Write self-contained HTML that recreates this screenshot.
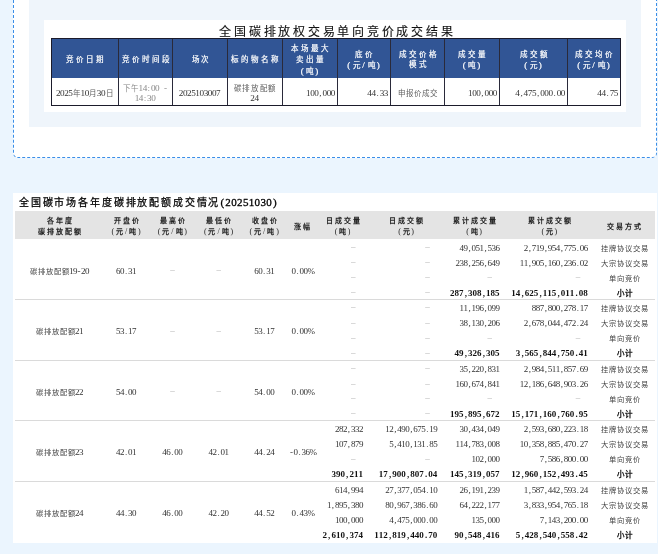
<!DOCTYPE html><html lang="zh-CN"><head><meta charset="utf-8"><style>
*{margin:0;padding:0;box-sizing:border-box}
html,body{width:658px;height:554px;overflow:hidden;background:#ebf5fe}
body{position:relative;font-family:"Liberation Serif",serif;color:#333;will-change:transform}
div{position:absolute;white-space:nowrap}
x,y{display:inline-block;text-align:center;font-style:normal}
#dash{left:13px;top:-20px;width:644px;height:178px;border:1px dashed #3a8ee8;border-radius:5px;background:#fff}
#inner{left:29px;top:-10px;width:612px;height:137px;background:#eff5fb}
#img1{left:44px;top:20px;width:582px;height:92px;background:#fff}
#t1{left:51px;top:38px;width:570px;height:68px;border:1px solid #1b1b2b;background:#fff}
#t1h{left:0;top:0;width:568px;height:39px;background:#315595}
.vl{top:0;width:1px;height:66px;background:#2a2a3a}
#img2{left:13px;top:193px;width:644px;height:350px;background:#fff}
#band{left:15px;top:211px;width:640px;height:28px;background:#e4e4e4}
.sep{left:15px;width:640px;height:1px;background:#dadada}
.tt1{font-size:12px;color:#111;line-height:16px;-webkit-text-stroke:0.12px #111}
.tt2{font-size:10px;color:#000;line-height:14px;-webkit-text-stroke:0.25px #000}
.tt2 x{font-size:11px;-webkit-text-stroke:0.3px #000}
.h1{color:#fff;font-size:7.5px;font-weight:normal;-webkit-text-stroke:0.2px #fff;line-height:10.7px;text-align:center}
.h1 x{font-size:9px}
.h2{color:#222;font-size:7px;font-weight:bold;line-height:10.4px;text-align:center}
.h2 x{font-size:8px;font-weight:normal}
.n1{color:#333;font-size:9.2px;line-height:9.4px}
.n1 y{font-size:7.5px;color:#606060}
.n2{color:#333;font-size:9px;line-height:10px}
.n2 y{font-size:7.3px;color:#444}
.bd{font-weight:bold;color:#111}
.bd y{font-size:7.5px;color:#111;font-weight:normal;-webkit-text-stroke:0.35px #111}
.g{color:#aaa}
.g2,.g2 y{color:#888}
</style></head><body><div id="dash"></div><div id="inner"></div><div id="img1"></div><div class="tt1" style="left:218px;top:24px"><y style="width:14.75px">全</y><y style="width:14.75px">国</y><y style="width:14.75px">碳</y><y style="width:14.75px">排</y><y style="width:14.75px">放</y><y style="width:14.75px">权</y><y style="width:14.75px">交</y><y style="width:14.75px">易</y><y style="width:14.75px">单</y><y style="width:14.75px">向</y><y style="width:14.75px">竞</y><y style="width:14.75px">价</y><y style="width:14.75px">成</y><y style="width:14.75px">交</y><y style="width:14.75px">结</y><y style="width:14.75px">果</y></div><div id="t1"><div id="t1h"></div><div class="vl" style="left:66px"></div><div class="vl" style="left:120px"></div><div class="vl" style="left:175px"></div><div class="vl" style="left:230px"></div><div class="vl" style="left:285px"></div><div class="vl" style="left:338px"></div><div class="vl" style="left:392px"></div><div class="vl" style="left:447px"></div><div class="vl" style="left:515px"></div></div><div class="h1" style="left:51px;width:67px;top:54.9px"><y style="width:10px">竞</y><y style="width:10px">价</y><y style="width:10px">日</y><y style="width:10px">期</y></div><div class="h1" style="left:118px;width:54px;top:54.9px"><y style="width:10px">竞</y><y style="width:10px">价</y><y style="width:10px">时</y><y style="width:10px">间</y><y style="width:10px">段</y></div><div class="h1" style="left:172px;width:55px;top:54.9px"><y style="width:9px">场</y><y style="width:9px">次</y></div><div class="h1" style="left:227px;width:55px;top:54.9px"><y style="width:10px">标</y><y style="width:10px">的</y><y style="width:10px">物</y><y style="width:10px">名</y><y style="width:10px">称</y></div><div class="h1" style="left:282px;width:55px;top:44.2px"><y style="width:10px">本</y><y style="width:10px">场</y><y style="width:10px">最</y><y style="width:10px">大</y><br><y style="width:10px">卖</y><y style="width:10px">出</y><y style="width:10px">量</y><br><y style="width:10px;text-align:right;padding-right:0.8px"><x>(</x></y><y style="width:10px">吨</y><y style="width:10px;text-align:left;padding-left:0.8px"><x>)</x></y></div><div class="h1" style="left:337px;width:53px;top:49.5px"><y style="width:10px">底</y><y style="width:10px">价</y><br><y style="width:10px;text-align:right;padding-right:0.8px"><x>(</x></y><y style="width:10px">元</y><x style="width:5px">/</x><y style="width:10px">吨</y><y style="width:10px;text-align:left;padding-left:0.8px"><x>)</x></y></div><div class="h1" style="left:390px;width:54px;top:49.5px"><y style="width:10px">成</y><y style="width:10px">交</y><y style="width:10px">价</y><y style="width:10px">格</y><br><y style="width:10px">模</y><y style="width:10px">式</y></div><div class="h1" style="left:444px;width:55px;top:49.5px"><y style="width:10px">成</y><y style="width:10px">交</y><y style="width:10px">量</y><br><y style="width:10px;text-align:right;padding-right:0.8px"><x>(</x></y><y style="width:10px">吨</y><y style="width:10px;text-align:left;padding-left:0.8px"><x>)</x></y></div><div class="h1" style="left:499px;width:68px;top:49.5px"><y style="width:10px">成</y><y style="width:10px">交</y><y style="width:10px">额</y><br><y style="width:10px;text-align:right;padding-right:0.8px"><x>(</x></y><y style="width:10px">元</y><y style="width:10px;text-align:left;padding-left:0.8px"><x>)</x></y></div><div class="h1" style="left:567px;width:53px;top:49.5px"><y style="width:10px">成</y><y style="width:10px">交</y><y style="width:10px">均</y><y style="width:10px">价</y><br><y style="width:10px;text-align:right;padding-right:0.8px"><x>(</x></y><y style="width:10px">元</y><x style="width:5px">/</x><y style="width:10px">吨</y><y style="width:10px;text-align:left;padding-left:0.8px"><x>)</x></y></div><div class="n1 " style="left:51px;width:67px;text-align:center;top:89.1px"><x style="width:4.15px">2</x><x style="width:4.15px">0</x><x style="width:4.15px">2</x><x style="width:4.15px">5</x><y style="width:8px">年</y><x style="width:4.15px">1</x><x style="width:4.15px">0</x><y style="width:8px">月</y><x style="width:4.15px">3</x><x style="width:4.15px">0</x><y style="width:8px">日</y></div><div class="n1 g2" style="left:118px;width:54px;text-align:center;top:84.4px"><y style="width:8px">下</y><y style="width:8px">午</y><x style="width:4.15px">1</x><x style="width:4.15px">4</x><x style="width:4.15px">:</x><x style="width:4.15px">0</x><x style="width:4.15px">0</x><x style="width:4.15px"></x><x style="width:4.15px">-</x><br><x style="width:4.15px">1</x><x style="width:4.15px">4</x><x style="width:4.15px">:</x><x style="width:4.15px">3</x><x style="width:4.15px">0</x></div><div class="n1 " style="left:172px;width:55px;text-align:center;top:89.1px"><x style="width:4.15px">2</x><x style="width:4.15px">0</x><x style="width:4.15px">2</x><x style="width:4.15px">5</x><x style="width:4.15px">1</x><x style="width:4.15px">0</x><x style="width:4.15px">3</x><x style="width:4.15px">0</x><x style="width:4.15px">0</x><x style="width:4.15px">7</x></div><div class="n1 " style="left:227px;width:55px;text-align:center;top:84.4px"><y style="width:8.6px">碳</y><y style="width:8.6px">排</y><y style="width:8.6px">放</y><y style="width:8.6px">配</y><y style="width:8.6px">额</y><br><x style="width:4.15px">2</x><x style="width:4.15px">4</x></div><div class="n1 " style="left:282px;width:53px;text-align:right;top:89.1px"><x style="width:4.15px">1</x><x style="width:4.15px">0</x><x style="width:4.15px">0</x><x style="width:4.15px">,</x><x style="width:4.15px">0</x><x style="width:4.15px">0</x><x style="width:4.15px">0</x></div><div class="n1 " style="left:337px;width:51px;text-align:right;top:89.1px"><x style="width:4.15px">4</x><x style="width:4.15px">4</x><x style="width:4.15px">.</x><x style="width:4.15px">3</x><x style="width:4.15px">3</x></div><div class="n1 " style="left:390px;width:54px;text-align:center;top:89.1px"><y style="width:8px">申</y><y style="width:8px">报</y><y style="width:8px">价</y><y style="width:8px">成</y><y style="width:8px">交</y></div><div class="n1 " style="left:444px;width:53px;text-align:right;top:89.1px"><x style="width:4.15px">1</x><x style="width:4.15px">0</x><x style="width:4.15px">0</x><x style="width:4.15px">,</x><x style="width:4.15px">0</x><x style="width:4.15px">0</x><x style="width:4.15px">0</x></div><div class="n1 " style="left:499px;width:66px;text-align:right;top:89.1px"><x style="width:4.15px">4</x><x style="width:4.15px">,</x><x style="width:4.15px">4</x><x style="width:4.15px">7</x><x style="width:4.15px">5</x><x style="width:4.15px">,</x><x style="width:4.15px">0</x><x style="width:4.15px">0</x><x style="width:4.15px">0</x><x style="width:4.15px">.</x><x style="width:4.15px">0</x><x style="width:4.15px">0</x></div><div class="n1 " style="left:567px;width:51px;text-align:right;top:89.1px"><x style="width:4.15px">4</x><x style="width:4.15px">4</x><x style="width:4.15px">.</x><x style="width:4.15px">7</x><x style="width:4.15px">5</x></div><div id="img2"></div><div class="tt2" style="left:18px;top:195px"><y style="width:11.85px">全</y><y style="width:11.85px">国</y><y style="width:11.85px">碳</y><y style="width:11.85px">市</y><y style="width:11.85px">场</y><y style="width:11.85px">各</y><y style="width:11.85px">年</y><y style="width:11.85px">度</y><y style="width:11.85px">碳</y><y style="width:11.85px">排</y><y style="width:11.85px">放</y><y style="width:11.85px">配</y><y style="width:11.85px">额</y><y style="width:11.85px">成</y><y style="width:11.85px">交</y><y style="width:11.85px">情</y><y style="width:11.85px">况</y><x style="width:5.85px">(</x><x style="width:5.85px">2</x><x style="width:5.85px">0</x><x style="width:5.85px">2</x><x style="width:5.85px">5</x><x style="width:5.85px">1</x><x style="width:5.85px">0</x><x style="width:5.85px">3</x><x style="width:5.85px">0</x><x style="width:5.85px">)</x></div><div id="band"></div><div class="h2" style="left:59.0px;width:80px;margin-left:-40px;top:216.3px"><y style="width:9px">各</y><y style="width:9px">年</y><y style="width:9px">度</y><br><y style="width:9px">碳</y><y style="width:9px">排</y><y style="width:9px">放</y><y style="width:9px">配</y><y style="width:9px">额</y></div><div class="h2" style="left:126.0px;width:80px;margin-left:-40px;top:216.3px"><y style="width:9px">开</y><y style="width:9px">盘</y><y style="width:9px">价</y><br><y style="width:9px;text-align:right;padding-right:0.7px"><x>(</x></y><y style="width:9px">元</y><x style="width:4.5px">/</x><y style="width:9px">吨</y><y style="width:9px;text-align:left;padding-left:0.7px"><x>)</x></y></div><div class="h2" style="left:172.3px;width:80px;margin-left:-40px;top:216.3px"><y style="width:9px">最</y><y style="width:9px">高</y><y style="width:9px">价</y><br><y style="width:9px;text-align:right;padding-right:0.7px"><x>(</x></y><y style="width:9px">元</y><x style="width:4.5px">/</x><y style="width:9px">吨</y><y style="width:9px;text-align:left;padding-left:0.7px"><x>)</x></y></div><div class="h2" style="left:218.5px;width:80px;margin-left:-40px;top:216.3px"><y style="width:9px">最</y><y style="width:9px">低</y><y style="width:9px">价</y><br><y style="width:9px;text-align:right;padding-right:0.7px"><x>(</x></y><y style="width:9px">元</y><x style="width:4.5px">/</x><y style="width:9px">吨</y><y style="width:9px;text-align:left;padding-left:0.7px"><x>)</x></y></div><div class="h2" style="left:264.2px;width:80px;margin-left:-40px;top:216.3px"><y style="width:9px">收</y><y style="width:9px">盘</y><y style="width:9px">价</y><br><y style="width:9px;text-align:right;padding-right:0.7px"><x>(</x></y><y style="width:9px">元</y><x style="width:4.5px">/</x><y style="width:9px">吨</y><y style="width:9px;text-align:left;padding-left:0.7px"><x>)</x></y></div><div class="h2" style="left:301.5px;width:80px;margin-left:-40px;top:221.5px"><y style="width:9px">涨</y><y style="width:9px">幅</y></div><div class="h2" style="left:342.5px;width:80px;margin-left:-40px;top:216.3px"><y style="width:9px">日</y><y style="width:9px">成</y><y style="width:9px">交</y><y style="width:9px">量</y><br><y style="width:9px;text-align:right;padding-right:0.7px"><x>(</x></y><y style="width:9px">吨</y><y style="width:9px;text-align:left;padding-left:0.7px"><x>)</x></y></div><div class="h2" style="left:406.0px;width:80px;margin-left:-40px;top:216.3px"><y style="width:9px">日</y><y style="width:9px">成</y><y style="width:9px">交</y><y style="width:9px">额</y><br><y style="width:9px;text-align:right;padding-right:0.7px"><x>(</x></y><y style="width:9px">元</y><y style="width:9px;text-align:left;padding-left:0.7px"><x>)</x></y></div><div class="h2" style="left:474.0px;width:80px;margin-left:-40px;top:216.3px"><y style="width:9px">累</y><y style="width:9px">计</y><y style="width:9px">成</y><y style="width:9px">交</y><y style="width:9px">量</y><br><y style="width:9px;text-align:right;padding-right:0.7px"><x>(</x></y><y style="width:9px">吨</y><y style="width:9px;text-align:left;padding-left:0.7px"><x>)</x></y></div><div class="h2" style="left:549.3px;width:80px;margin-left:-40px;top:216.3px"><y style="width:9px">累</y><y style="width:9px">计</y><y style="width:9px">成</y><y style="width:9px">交</y><y style="width:9px">额</y><br><y style="width:9px;text-align:right;padding-right:0.7px"><x>(</x></y><y style="width:9px">元</y><y style="width:9px;text-align:left;padding-left:0.7px"><x>)</x></y></div><div class="h2" style="left:624.0px;width:80px;margin-left:-40px;top:221.5px"><y style="width:9px">交</y><y style="width:9px">易</y><y style="width:9px">方</y><y style="width:9px">式</y></div><div class="n2" style="left:59.0px;width:100px;margin-left:-50px;text-align:center;top:265.7px"><y style="width:8px">碳</y><y style="width:8px">排</y><y style="width:8px">放</y><y style="width:8px">配</y><y style="width:8px">额</y><x style="width:4px">1</x><x style="width:4px">9</x><x style="width:4px">-</x><x style="width:4px">2</x><x style="width:4px">0</x></div><div class="n2" style="left:126.0px;width:100px;margin-left:-50px;text-align:center;top:265.7px"><x style="width:4px">6</x><x style="width:4px">0</x><x style="width:4px">.</x><x style="width:4px">3</x><x style="width:4px">1</x></div><div class="n2 g" style="left:172.3px;width:100px;margin-left:-50px;text-align:center;top:265.7px"><x style="width:4px;position:relative;top:-1.6px">–</x></div><div class="n2 g" style="left:218.5px;width:100px;margin-left:-50px;text-align:center;top:265.7px"><x style="width:4px;position:relative;top:-1.6px">–</x></div><div class="n2" style="left:264.2px;width:100px;margin-left:-50px;text-align:center;top:265.7px"><x style="width:4px">6</x><x style="width:4px">0</x><x style="width:4px">.</x><x style="width:4px">3</x><x style="width:4px">1</x></div><div class="n2" style="left:301.5px;width:100px;margin-left:-50px;text-align:center;top:265.7px"><x style="width:4px">0</x><x style="width:4px">.</x><x style="width:4px">0</x><x style="width:4px">0</x><x style="width:4px">%</x></div><div class="n2 g" style="left:362.9px;width:120px;margin-left:-120px;text-align:right;top:242.5px"><x style="width:4px;position:relative;top:-1.6px">–</x><x style="width:4px"></x><x style="width:4px"></x></div><div class="n2 g" style="left:437.3px;width:120px;margin-left:-120px;text-align:right;top:242.5px"><x style="width:4px;position:relative;top:-1.6px">–</x><x style="width:4px"></x><x style="width:4px"></x></div><div class="n2" style="left:499.5px;width:120px;margin-left:-120px;text-align:right;top:242.5px"><x style="width:4px">4</x><x style="width:4px">9</x><x style="width:4px">,</x><x style="width:4px">0</x><x style="width:4px">5</x><x style="width:4px">1</x><x style="width:4px">,</x><x style="width:4px">5</x><x style="width:4px">3</x><x style="width:4px">6</x></div><div class="n2" style="left:587.8px;width:120px;margin-left:-120px;text-align:right;top:242.5px"><x style="width:4px">2</x><x style="width:4px">,</x><x style="width:4px">7</x><x style="width:4px">1</x><x style="width:4px">9</x><x style="width:4px">,</x><x style="width:4px">9</x><x style="width:4px">5</x><x style="width:4px">4</x><x style="width:4px">,</x><x style="width:4px">7</x><x style="width:4px">7</x><x style="width:4px">5</x><x style="width:4px">.</x><x style="width:4px">0</x><x style="width:4px">6</x></div><div class="n2" style="left:624px;width:80px;margin-left:-40px;text-align:center;top:242.5px"><y style="width:8px">挂</y><y style="width:8px">牌</y><y style="width:8px">协</y><y style="width:8px">议</y><y style="width:8px">交</y><y style="width:8px">易</y></div><div class="n2 g" style="left:362.9px;width:120px;margin-left:-120px;text-align:right;top:257.9px"><x style="width:4px;position:relative;top:-1.6px">–</x><x style="width:4px"></x><x style="width:4px"></x></div><div class="n2 g" style="left:437.3px;width:120px;margin-left:-120px;text-align:right;top:257.9px"><x style="width:4px;position:relative;top:-1.6px">–</x><x style="width:4px"></x><x style="width:4px"></x></div><div class="n2" style="left:499.5px;width:120px;margin-left:-120px;text-align:right;top:257.9px"><x style="width:4px">2</x><x style="width:4px">3</x><x style="width:4px">8</x><x style="width:4px">,</x><x style="width:4px">2</x><x style="width:4px">5</x><x style="width:4px">6</x><x style="width:4px">,</x><x style="width:4px">6</x><x style="width:4px">4</x><x style="width:4px">9</x></div><div class="n2" style="left:587.8px;width:120px;margin-left:-120px;text-align:right;top:257.9px"><x style="width:4px">1</x><x style="width:4px">1</x><x style="width:4px">,</x><x style="width:4px">9</x><x style="width:4px">0</x><x style="width:4px">5</x><x style="width:4px">,</x><x style="width:4px">1</x><x style="width:4px">6</x><x style="width:4px">0</x><x style="width:4px">,</x><x style="width:4px">2</x><x style="width:4px">3</x><x style="width:4px">6</x><x style="width:4px">.</x><x style="width:4px">0</x><x style="width:4px">2</x></div><div class="n2" style="left:624px;width:80px;margin-left:-40px;text-align:center;top:257.9px"><y style="width:8px">大</y><y style="width:8px">宗</y><y style="width:8px">协</y><y style="width:8px">议</y><y style="width:8px">交</y><y style="width:8px">易</y></div><div class="n2 g" style="left:362.9px;width:120px;margin-left:-120px;text-align:right;top:272.8px"><x style="width:4px;position:relative;top:-1.6px">–</x><x style="width:4px"></x><x style="width:4px"></x></div><div class="n2 g" style="left:437.3px;width:120px;margin-left:-120px;text-align:right;top:272.8px"><x style="width:4px;position:relative;top:-1.6px">–</x><x style="width:4px"></x><x style="width:4px"></x></div><div class="n2 g" style="left:499.5px;width:120px;margin-left:-120px;text-align:right;top:272.8px"><x style="width:4px;position:relative;top:-1.6px">–</x><x style="width:4px"></x><x style="width:4px"></x></div><div class="n2 g" style="left:587.8px;width:120px;margin-left:-120px;text-align:right;top:272.8px"><x style="width:4px;position:relative;top:-1.6px">–</x><x style="width:4px"></x><x style="width:4px"></x></div><div class="n2" style="left:624px;width:80px;margin-left:-40px;text-align:center;top:272.8px"><y style="width:8px">单</y><y style="width:8px">向</y><y style="width:8px">竞</y><y style="width:8px">价</y></div><div class="n2 g" style="left:362.9px;width:120px;margin-left:-120px;text-align:right;top:287.7px"><x style="width:4px;position:relative;top:-1.6px">–</x><x style="width:4px"></x><x style="width:4px"></x></div><div class="n2 g" style="left:437.3px;width:120px;margin-left:-120px;text-align:right;top:287.7px"><x style="width:4px;position:relative;top:-1.6px">–</x><x style="width:4px"></x><x style="width:4px"></x></div><div class="n2 bd" style="left:499.5px;width:120px;margin-left:-120px;text-align:right;top:287.7px"><x style="width:4.5px">2</x><x style="width:4.5px">8</x><x style="width:4.5px">7</x><x style="width:4.5px">,</x><x style="width:4.5px">3</x><x style="width:4.5px">0</x><x style="width:4.5px">8</x><x style="width:4.5px">,</x><x style="width:4.5px">1</x><x style="width:4.5px">8</x><x style="width:4.5px">5</x></div><div class="n2 bd" style="left:587.8px;width:120px;margin-left:-120px;text-align:right;top:287.7px"><x style="width:4.5px">1</x><x style="width:4.5px">4</x><x style="width:4.5px">,</x><x style="width:4.5px">6</x><x style="width:4.5px">2</x><x style="width:4.5px">5</x><x style="width:4.5px">,</x><x style="width:4.5px">1</x><x style="width:4.5px">1</x><x style="width:4.5px">5</x><x style="width:4.5px">,</x><x style="width:4.5px">0</x><x style="width:4.5px">1</x><x style="width:4.5px">1</x><x style="width:4.5px">.</x><x style="width:4.5px">0</x><x style="width:4.5px">8</x></div><div class="n2 bd" style="left:624px;width:80px;margin-left:-40px;text-align:center;top:287.7px"><y style="width:8px">小</y><y style="width:8px">计</y></div><div class="sep" style="top:299.0px"></div><div class="n2" style="left:59.0px;width:100px;margin-left:-50px;text-align:center;top:326.2px"><y style="width:8px">碳</y><y style="width:8px">排</y><y style="width:8px">放</y><y style="width:8px">配</y><y style="width:8px">额</y><x style="width:4px">2</x><x style="width:4px">1</x></div><div class="n2" style="left:126.0px;width:100px;margin-left:-50px;text-align:center;top:326.2px"><x style="width:4px">5</x><x style="width:4px">3</x><x style="width:4px">.</x><x style="width:4px">1</x><x style="width:4px">7</x></div><div class="n2 g" style="left:172.3px;width:100px;margin-left:-50px;text-align:center;top:326.2px"><x style="width:4px;position:relative;top:-1.6px">–</x></div><div class="n2 g" style="left:218.5px;width:100px;margin-left:-50px;text-align:center;top:326.2px"><x style="width:4px;position:relative;top:-1.6px">–</x></div><div class="n2" style="left:264.2px;width:100px;margin-left:-50px;text-align:center;top:326.2px"><x style="width:4px">5</x><x style="width:4px">3</x><x style="width:4px">.</x><x style="width:4px">1</x><x style="width:4px">7</x></div><div class="n2" style="left:301.5px;width:100px;margin-left:-50px;text-align:center;top:326.2px"><x style="width:4px">0</x><x style="width:4px">.</x><x style="width:4px">0</x><x style="width:4px">0</x><x style="width:4px">%</x></div><div class="n2 g" style="left:362.9px;width:120px;margin-left:-120px;text-align:right;top:303.0px"><x style="width:4px;position:relative;top:-1.6px">–</x><x style="width:4px"></x><x style="width:4px"></x></div><div class="n2 g" style="left:437.3px;width:120px;margin-left:-120px;text-align:right;top:303.0px"><x style="width:4px;position:relative;top:-1.6px">–</x><x style="width:4px"></x><x style="width:4px"></x></div><div class="n2" style="left:499.5px;width:120px;margin-left:-120px;text-align:right;top:303.0px"><x style="width:4px">1</x><x style="width:4px">1</x><x style="width:4px">,</x><x style="width:4px">1</x><x style="width:4px">9</x><x style="width:4px">6</x><x style="width:4px">,</x><x style="width:4px">0</x><x style="width:4px">9</x><x style="width:4px">9</x></div><div class="n2" style="left:587.8px;width:120px;margin-left:-120px;text-align:right;top:303.0px"><x style="width:4px">8</x><x style="width:4px">8</x><x style="width:4px">7</x><x style="width:4px">,</x><x style="width:4px">8</x><x style="width:4px">0</x><x style="width:4px">0</x><x style="width:4px">,</x><x style="width:4px">2</x><x style="width:4px">7</x><x style="width:4px">8</x><x style="width:4px">.</x><x style="width:4px">1</x><x style="width:4px">7</x></div><div class="n2" style="left:624px;width:80px;margin-left:-40px;text-align:center;top:303.0px"><y style="width:8px">挂</y><y style="width:8px">牌</y><y style="width:8px">协</y><y style="width:8px">议</y><y style="width:8px">交</y><y style="width:8px">易</y></div><div class="n2 g" style="left:362.9px;width:120px;margin-left:-120px;text-align:right;top:318.4px"><x style="width:4px;position:relative;top:-1.6px">–</x><x style="width:4px"></x><x style="width:4px"></x></div><div class="n2 g" style="left:437.3px;width:120px;margin-left:-120px;text-align:right;top:318.4px"><x style="width:4px;position:relative;top:-1.6px">–</x><x style="width:4px"></x><x style="width:4px"></x></div><div class="n2" style="left:499.5px;width:120px;margin-left:-120px;text-align:right;top:318.4px"><x style="width:4px">3</x><x style="width:4px">8</x><x style="width:4px">,</x><x style="width:4px">1</x><x style="width:4px">3</x><x style="width:4px">0</x><x style="width:4px">,</x><x style="width:4px">2</x><x style="width:4px">0</x><x style="width:4px">6</x></div><div class="n2" style="left:587.8px;width:120px;margin-left:-120px;text-align:right;top:318.4px"><x style="width:4px">2</x><x style="width:4px">,</x><x style="width:4px">6</x><x style="width:4px">7</x><x style="width:4px">8</x><x style="width:4px">,</x><x style="width:4px">0</x><x style="width:4px">4</x><x style="width:4px">4</x><x style="width:4px">,</x><x style="width:4px">4</x><x style="width:4px">7</x><x style="width:4px">2</x><x style="width:4px">.</x><x style="width:4px">2</x><x style="width:4px">4</x></div><div class="n2" style="left:624px;width:80px;margin-left:-40px;text-align:center;top:318.4px"><y style="width:8px">大</y><y style="width:8px">宗</y><y style="width:8px">协</y><y style="width:8px">议</y><y style="width:8px">交</y><y style="width:8px">易</y></div><div class="n2 g" style="left:362.9px;width:120px;margin-left:-120px;text-align:right;top:333.3px"><x style="width:4px;position:relative;top:-1.6px">–</x><x style="width:4px"></x><x style="width:4px"></x></div><div class="n2 g" style="left:437.3px;width:120px;margin-left:-120px;text-align:right;top:333.3px"><x style="width:4px;position:relative;top:-1.6px">–</x><x style="width:4px"></x><x style="width:4px"></x></div><div class="n2 g" style="left:499.5px;width:120px;margin-left:-120px;text-align:right;top:333.3px"><x style="width:4px;position:relative;top:-1.6px">–</x><x style="width:4px"></x><x style="width:4px"></x></div><div class="n2 g" style="left:587.8px;width:120px;margin-left:-120px;text-align:right;top:333.3px"><x style="width:4px;position:relative;top:-1.6px">–</x><x style="width:4px"></x><x style="width:4px"></x></div><div class="n2" style="left:624px;width:80px;margin-left:-40px;text-align:center;top:333.3px"><y style="width:8px">单</y><y style="width:8px">向</y><y style="width:8px">竞</y><y style="width:8px">价</y></div><div class="n2 g" style="left:362.9px;width:120px;margin-left:-120px;text-align:right;top:348.2px"><x style="width:4px;position:relative;top:-1.6px">–</x><x style="width:4px"></x><x style="width:4px"></x></div><div class="n2 g" style="left:437.3px;width:120px;margin-left:-120px;text-align:right;top:348.2px"><x style="width:4px;position:relative;top:-1.6px">–</x><x style="width:4px"></x><x style="width:4px"></x></div><div class="n2 bd" style="left:499.5px;width:120px;margin-left:-120px;text-align:right;top:348.2px"><x style="width:4.5px">4</x><x style="width:4.5px">9</x><x style="width:4.5px">,</x><x style="width:4.5px">3</x><x style="width:4.5px">2</x><x style="width:4.5px">6</x><x style="width:4.5px">,</x><x style="width:4.5px">3</x><x style="width:4.5px">0</x><x style="width:4.5px">5</x></div><div class="n2 bd" style="left:587.8px;width:120px;margin-left:-120px;text-align:right;top:348.2px"><x style="width:4.5px">3</x><x style="width:4.5px">,</x><x style="width:4.5px">5</x><x style="width:4.5px">6</x><x style="width:4.5px">5</x><x style="width:4.5px">,</x><x style="width:4.5px">8</x><x style="width:4.5px">4</x><x style="width:4.5px">4</x><x style="width:4.5px">,</x><x style="width:4.5px">7</x><x style="width:4.5px">5</x><x style="width:4.5px">0</x><x style="width:4.5px">.</x><x style="width:4.5px">4</x><x style="width:4.5px">1</x></div><div class="n2 bd" style="left:624px;width:80px;margin-left:-40px;text-align:center;top:348.2px"><y style="width:8px">小</y><y style="width:8px">计</y></div><div class="sep" style="top:359.7px"></div><div class="n2" style="left:59.0px;width:100px;margin-left:-50px;text-align:center;top:386.9px"><y style="width:8px">碳</y><y style="width:8px">排</y><y style="width:8px">放</y><y style="width:8px">配</y><y style="width:8px">额</y><x style="width:4px">2</x><x style="width:4px">2</x></div><div class="n2" style="left:126.0px;width:100px;margin-left:-50px;text-align:center;top:386.9px"><x style="width:4px">5</x><x style="width:4px">4</x><x style="width:4px">.</x><x style="width:4px">0</x><x style="width:4px">0</x></div><div class="n2 g" style="left:172.3px;width:100px;margin-left:-50px;text-align:center;top:386.9px"><x style="width:4px;position:relative;top:-1.6px">–</x></div><div class="n2 g" style="left:218.5px;width:100px;margin-left:-50px;text-align:center;top:386.9px"><x style="width:4px;position:relative;top:-1.6px">–</x></div><div class="n2" style="left:264.2px;width:100px;margin-left:-50px;text-align:center;top:386.9px"><x style="width:4px">5</x><x style="width:4px">4</x><x style="width:4px">.</x><x style="width:4px">0</x><x style="width:4px">0</x></div><div class="n2" style="left:301.5px;width:100px;margin-left:-50px;text-align:center;top:386.9px"><x style="width:4px">0</x><x style="width:4px">.</x><x style="width:4px">0</x><x style="width:4px">0</x><x style="width:4px">%</x></div><div class="n2 g" style="left:362.9px;width:120px;margin-left:-120px;text-align:right;top:363.7px"><x style="width:4px;position:relative;top:-1.6px">–</x><x style="width:4px"></x><x style="width:4px"></x></div><div class="n2 g" style="left:437.3px;width:120px;margin-left:-120px;text-align:right;top:363.7px"><x style="width:4px;position:relative;top:-1.6px">–</x><x style="width:4px"></x><x style="width:4px"></x></div><div class="n2" style="left:499.5px;width:120px;margin-left:-120px;text-align:right;top:363.7px"><x style="width:4px">3</x><x style="width:4px">5</x><x style="width:4px">,</x><x style="width:4px">2</x><x style="width:4px">2</x><x style="width:4px">0</x><x style="width:4px">,</x><x style="width:4px">8</x><x style="width:4px">3</x><x style="width:4px">1</x></div><div class="n2" style="left:587.8px;width:120px;margin-left:-120px;text-align:right;top:363.7px"><x style="width:4px">2</x><x style="width:4px">,</x><x style="width:4px">9</x><x style="width:4px">8</x><x style="width:4px">4</x><x style="width:4px">,</x><x style="width:4px">5</x><x style="width:4px">1</x><x style="width:4px">1</x><x style="width:4px">,</x><x style="width:4px">8</x><x style="width:4px">5</x><x style="width:4px">7</x><x style="width:4px">.</x><x style="width:4px">6</x><x style="width:4px">9</x></div><div class="n2" style="left:624px;width:80px;margin-left:-40px;text-align:center;top:363.7px"><y style="width:8px">挂</y><y style="width:8px">牌</y><y style="width:8px">协</y><y style="width:8px">议</y><y style="width:8px">交</y><y style="width:8px">易</y></div><div class="n2 g" style="left:362.9px;width:120px;margin-left:-120px;text-align:right;top:379.1px"><x style="width:4px;position:relative;top:-1.6px">–</x><x style="width:4px"></x><x style="width:4px"></x></div><div class="n2 g" style="left:437.3px;width:120px;margin-left:-120px;text-align:right;top:379.1px"><x style="width:4px;position:relative;top:-1.6px">–</x><x style="width:4px"></x><x style="width:4px"></x></div><div class="n2" style="left:499.5px;width:120px;margin-left:-120px;text-align:right;top:379.1px"><x style="width:4px">1</x><x style="width:4px">6</x><x style="width:4px">0</x><x style="width:4px">,</x><x style="width:4px">6</x><x style="width:4px">7</x><x style="width:4px">4</x><x style="width:4px">,</x><x style="width:4px">8</x><x style="width:4px">4</x><x style="width:4px">1</x></div><div class="n2" style="left:587.8px;width:120px;margin-left:-120px;text-align:right;top:379.1px"><x style="width:4px">1</x><x style="width:4px">2</x><x style="width:4px">,</x><x style="width:4px">1</x><x style="width:4px">8</x><x style="width:4px">6</x><x style="width:4px">,</x><x style="width:4px">6</x><x style="width:4px">4</x><x style="width:4px">8</x><x style="width:4px">,</x><x style="width:4px">9</x><x style="width:4px">0</x><x style="width:4px">3</x><x style="width:4px">.</x><x style="width:4px">2</x><x style="width:4px">6</x></div><div class="n2" style="left:624px;width:80px;margin-left:-40px;text-align:center;top:379.1px"><y style="width:8px">大</y><y style="width:8px">宗</y><y style="width:8px">协</y><y style="width:8px">议</y><y style="width:8px">交</y><y style="width:8px">易</y></div><div class="n2 g" style="left:362.9px;width:120px;margin-left:-120px;text-align:right;top:394.0px"><x style="width:4px;position:relative;top:-1.6px">–</x><x style="width:4px"></x><x style="width:4px"></x></div><div class="n2 g" style="left:437.3px;width:120px;margin-left:-120px;text-align:right;top:394.0px"><x style="width:4px;position:relative;top:-1.6px">–</x><x style="width:4px"></x><x style="width:4px"></x></div><div class="n2 g" style="left:499.5px;width:120px;margin-left:-120px;text-align:right;top:394.0px"><x style="width:4px;position:relative;top:-1.6px">–</x><x style="width:4px"></x><x style="width:4px"></x></div><div class="n2 g" style="left:587.8px;width:120px;margin-left:-120px;text-align:right;top:394.0px"><x style="width:4px;position:relative;top:-1.6px">–</x><x style="width:4px"></x><x style="width:4px"></x></div><div class="n2" style="left:624px;width:80px;margin-left:-40px;text-align:center;top:394.0px"><y style="width:8px">单</y><y style="width:8px">向</y><y style="width:8px">竞</y><y style="width:8px">价</y></div><div class="n2 g" style="left:362.9px;width:120px;margin-left:-120px;text-align:right;top:408.9px"><x style="width:4px;position:relative;top:-1.6px">–</x><x style="width:4px"></x><x style="width:4px"></x></div><div class="n2 g" style="left:437.3px;width:120px;margin-left:-120px;text-align:right;top:408.9px"><x style="width:4px;position:relative;top:-1.6px">–</x><x style="width:4px"></x><x style="width:4px"></x></div><div class="n2 bd" style="left:499.5px;width:120px;margin-left:-120px;text-align:right;top:408.9px"><x style="width:4.5px">1</x><x style="width:4.5px">9</x><x style="width:4.5px">5</x><x style="width:4.5px">,</x><x style="width:4.5px">8</x><x style="width:4.5px">9</x><x style="width:4.5px">5</x><x style="width:4.5px">,</x><x style="width:4.5px">6</x><x style="width:4.5px">7</x><x style="width:4.5px">2</x></div><div class="n2 bd" style="left:587.8px;width:120px;margin-left:-120px;text-align:right;top:408.9px"><x style="width:4.5px">1</x><x style="width:4.5px">5</x><x style="width:4.5px">,</x><x style="width:4.5px">1</x><x style="width:4.5px">7</x><x style="width:4.5px">1</x><x style="width:4.5px">,</x><x style="width:4.5px">1</x><x style="width:4.5px">6</x><x style="width:4.5px">0</x><x style="width:4.5px">,</x><x style="width:4.5px">7</x><x style="width:4.5px">6</x><x style="width:4.5px">0</x><x style="width:4.5px">.</x><x style="width:4.5px">9</x><x style="width:4.5px">5</x></div><div class="n2 bd" style="left:624px;width:80px;margin-left:-40px;text-align:center;top:408.9px"><y style="width:8px">小</y><y style="width:8px">计</y></div><div class="sep" style="top:420.0px"></div><div class="n2" style="left:59.0px;width:100px;margin-left:-50px;text-align:center;top:447.2px"><y style="width:8px">碳</y><y style="width:8px">排</y><y style="width:8px">放</y><y style="width:8px">配</y><y style="width:8px">额</y><x style="width:4px">2</x><x style="width:4px">3</x></div><div class="n2" style="left:126.0px;width:100px;margin-left:-50px;text-align:center;top:447.2px"><x style="width:4px">4</x><x style="width:4px">2</x><x style="width:4px">.</x><x style="width:4px">0</x><x style="width:4px">1</x></div><div class="n2" style="left:172.3px;width:100px;margin-left:-50px;text-align:center;top:447.2px"><x style="width:4px">4</x><x style="width:4px">6</x><x style="width:4px">.</x><x style="width:4px">0</x><x style="width:4px">0</x></div><div class="n2" style="left:218.5px;width:100px;margin-left:-50px;text-align:center;top:447.2px"><x style="width:4px">4</x><x style="width:4px">2</x><x style="width:4px">.</x><x style="width:4px">0</x><x style="width:4px">1</x></div><div class="n2" style="left:264.2px;width:100px;margin-left:-50px;text-align:center;top:447.2px"><x style="width:4px">4</x><x style="width:4px">4</x><x style="width:4px">.</x><x style="width:4px">2</x><x style="width:4px">4</x></div><div class="n2" style="left:301.5px;width:100px;margin-left:-50px;text-align:center;top:447.2px"><x style="width:4px">-</x><x style="width:4px">0</x><x style="width:4px">.</x><x style="width:4px">3</x><x style="width:4px">6</x><x style="width:4px">%</x></div><div class="n2" style="left:362.9px;width:120px;margin-left:-120px;text-align:right;top:424.0px"><x style="width:4px">2</x><x style="width:4px">8</x><x style="width:4px">2</x><x style="width:4px">,</x><x style="width:4px">3</x><x style="width:4px">3</x><x style="width:4px">2</x></div><div class="n2" style="left:437.3px;width:120px;margin-left:-120px;text-align:right;top:424.0px"><x style="width:4px">1</x><x style="width:4px">2</x><x style="width:4px">,</x><x style="width:4px">4</x><x style="width:4px">9</x><x style="width:4px">0</x><x style="width:4px">,</x><x style="width:4px">6</x><x style="width:4px">7</x><x style="width:4px">5</x><x style="width:4px">.</x><x style="width:4px">1</x><x style="width:4px">9</x></div><div class="n2" style="left:499.5px;width:120px;margin-left:-120px;text-align:right;top:424.0px"><x style="width:4px">3</x><x style="width:4px">0</x><x style="width:4px">,</x><x style="width:4px">4</x><x style="width:4px">3</x><x style="width:4px">4</x><x style="width:4px">,</x><x style="width:4px">0</x><x style="width:4px">4</x><x style="width:4px">9</x></div><div class="n2" style="left:587.8px;width:120px;margin-left:-120px;text-align:right;top:424.0px"><x style="width:4px">2</x><x style="width:4px">,</x><x style="width:4px">5</x><x style="width:4px">9</x><x style="width:4px">3</x><x style="width:4px">,</x><x style="width:4px">6</x><x style="width:4px">8</x><x style="width:4px">0</x><x style="width:4px">,</x><x style="width:4px">2</x><x style="width:4px">2</x><x style="width:4px">3</x><x style="width:4px">.</x><x style="width:4px">1</x><x style="width:4px">8</x></div><div class="n2" style="left:624px;width:80px;margin-left:-40px;text-align:center;top:424.0px"><y style="width:8px">挂</y><y style="width:8px">牌</y><y style="width:8px">协</y><y style="width:8px">议</y><y style="width:8px">交</y><y style="width:8px">易</y></div><div class="n2" style="left:362.9px;width:120px;margin-left:-120px;text-align:right;top:439.4px"><x style="width:4px">1</x><x style="width:4px">0</x><x style="width:4px">7</x><x style="width:4px">,</x><x style="width:4px">8</x><x style="width:4px">7</x><x style="width:4px">9</x></div><div class="n2" style="left:437.3px;width:120px;margin-left:-120px;text-align:right;top:439.4px"><x style="width:4px">5</x><x style="width:4px">,</x><x style="width:4px">4</x><x style="width:4px">1</x><x style="width:4px">0</x><x style="width:4px">,</x><x style="width:4px">1</x><x style="width:4px">3</x><x style="width:4px">1</x><x style="width:4px">.</x><x style="width:4px">8</x><x style="width:4px">5</x></div><div class="n2" style="left:499.5px;width:120px;margin-left:-120px;text-align:right;top:439.4px"><x style="width:4px">1</x><x style="width:4px">1</x><x style="width:4px">4</x><x style="width:4px">,</x><x style="width:4px">7</x><x style="width:4px">8</x><x style="width:4px">3</x><x style="width:4px">,</x><x style="width:4px">0</x><x style="width:4px">0</x><x style="width:4px">8</x></div><div class="n2" style="left:587.8px;width:120px;margin-left:-120px;text-align:right;top:439.4px"><x style="width:4px">1</x><x style="width:4px">0</x><x style="width:4px">,</x><x style="width:4px">3</x><x style="width:4px">5</x><x style="width:4px">8</x><x style="width:4px">,</x><x style="width:4px">8</x><x style="width:4px">8</x><x style="width:4px">5</x><x style="width:4px">,</x><x style="width:4px">4</x><x style="width:4px">7</x><x style="width:4px">0</x><x style="width:4px">.</x><x style="width:4px">2</x><x style="width:4px">7</x></div><div class="n2" style="left:624px;width:80px;margin-left:-40px;text-align:center;top:439.4px"><y style="width:8px">大</y><y style="width:8px">宗</y><y style="width:8px">协</y><y style="width:8px">议</y><y style="width:8px">交</y><y style="width:8px">易</y></div><div class="n2 g" style="left:362.9px;width:120px;margin-left:-120px;text-align:right;top:454.3px"><x style="width:4px;position:relative;top:-1.6px">–</x><x style="width:4px"></x><x style="width:4px"></x></div><div class="n2 g" style="left:437.3px;width:120px;margin-left:-120px;text-align:right;top:454.3px"><x style="width:4px;position:relative;top:-1.6px">–</x><x style="width:4px"></x><x style="width:4px"></x></div><div class="n2" style="left:499.5px;width:120px;margin-left:-120px;text-align:right;top:454.3px"><x style="width:4px">1</x><x style="width:4px">0</x><x style="width:4px">2</x><x style="width:4px">,</x><x style="width:4px">0</x><x style="width:4px">0</x><x style="width:4px">0</x></div><div class="n2" style="left:587.8px;width:120px;margin-left:-120px;text-align:right;top:454.3px"><x style="width:4px">7</x><x style="width:4px">,</x><x style="width:4px">5</x><x style="width:4px">8</x><x style="width:4px">6</x><x style="width:4px">,</x><x style="width:4px">8</x><x style="width:4px">0</x><x style="width:4px">0</x><x style="width:4px">.</x><x style="width:4px">0</x><x style="width:4px">0</x></div><div class="n2" style="left:624px;width:80px;margin-left:-40px;text-align:center;top:454.3px"><y style="width:8px">单</y><y style="width:8px">向</y><y style="width:8px">竞</y><y style="width:8px">价</y></div><div class="n2 bd" style="left:362.9px;width:120px;margin-left:-120px;text-align:right;top:469.2px"><x style="width:4.5px">3</x><x style="width:4.5px">9</x><x style="width:4.5px">0</x><x style="width:4.5px">,</x><x style="width:4.5px">2</x><x style="width:4.5px">1</x><x style="width:4.5px">1</x></div><div class="n2 bd" style="left:437.3px;width:120px;margin-left:-120px;text-align:right;top:469.2px"><x style="width:4.5px">1</x><x style="width:4.5px">7</x><x style="width:4.5px">,</x><x style="width:4.5px">9</x><x style="width:4.5px">0</x><x style="width:4.5px">0</x><x style="width:4.5px">,</x><x style="width:4.5px">8</x><x style="width:4.5px">0</x><x style="width:4.5px">7</x><x style="width:4.5px">.</x><x style="width:4.5px">0</x><x style="width:4.5px">4</x></div><div class="n2 bd" style="left:499.5px;width:120px;margin-left:-120px;text-align:right;top:469.2px"><x style="width:4.5px">1</x><x style="width:4.5px">4</x><x style="width:4.5px">5</x><x style="width:4.5px">,</x><x style="width:4.5px">3</x><x style="width:4.5px">1</x><x style="width:4.5px">9</x><x style="width:4.5px">,</x><x style="width:4.5px">0</x><x style="width:4.5px">5</x><x style="width:4.5px">7</x></div><div class="n2 bd" style="left:587.8px;width:120px;margin-left:-120px;text-align:right;top:469.2px"><x style="width:4.5px">1</x><x style="width:4.5px">2</x><x style="width:4.5px">,</x><x style="width:4.5px">9</x><x style="width:4.5px">6</x><x style="width:4.5px">0</x><x style="width:4.5px">,</x><x style="width:4.5px">1</x><x style="width:4.5px">5</x><x style="width:4.5px">2</x><x style="width:4.5px">,</x><x style="width:4.5px">4</x><x style="width:4.5px">9</x><x style="width:4.5px">3</x><x style="width:4.5px">.</x><x style="width:4.5px">4</x><x style="width:4.5px">5</x></div><div class="n2 bd" style="left:624px;width:80px;margin-left:-40px;text-align:center;top:469.2px"><y style="width:8px">小</y><y style="width:8px">计</y></div><div class="sep" style="top:480.7px"></div><div class="n2" style="left:59.0px;width:100px;margin-left:-50px;text-align:center;top:507.9px"><y style="width:8px">碳</y><y style="width:8px">排</y><y style="width:8px">放</y><y style="width:8px">配</y><y style="width:8px">额</y><x style="width:4px">2</x><x style="width:4px">4</x></div><div class="n2" style="left:126.0px;width:100px;margin-left:-50px;text-align:center;top:507.9px"><x style="width:4px">4</x><x style="width:4px">4</x><x style="width:4px">.</x><x style="width:4px">3</x><x style="width:4px">0</x></div><div class="n2" style="left:172.3px;width:100px;margin-left:-50px;text-align:center;top:507.9px"><x style="width:4px">4</x><x style="width:4px">6</x><x style="width:4px">.</x><x style="width:4px">0</x><x style="width:4px">0</x></div><div class="n2" style="left:218.5px;width:100px;margin-left:-50px;text-align:center;top:507.9px"><x style="width:4px">4</x><x style="width:4px">2</x><x style="width:4px">.</x><x style="width:4px">2</x><x style="width:4px">0</x></div><div class="n2" style="left:264.2px;width:100px;margin-left:-50px;text-align:center;top:507.9px"><x style="width:4px">4</x><x style="width:4px">4</x><x style="width:4px">.</x><x style="width:4px">5</x><x style="width:4px">2</x></div><div class="n2" style="left:301.5px;width:100px;margin-left:-50px;text-align:center;top:507.9px"><x style="width:4px">0</x><x style="width:4px">.</x><x style="width:4px">4</x><x style="width:4px">3</x><x style="width:4px">%</x></div><div class="n2" style="left:362.9px;width:120px;margin-left:-120px;text-align:right;top:484.7px"><x style="width:4px">6</x><x style="width:4px">1</x><x style="width:4px">4</x><x style="width:4px">,</x><x style="width:4px">9</x><x style="width:4px">9</x><x style="width:4px">4</x></div><div class="n2" style="left:437.3px;width:120px;margin-left:-120px;text-align:right;top:484.7px"><x style="width:4px">2</x><x style="width:4px">7</x><x style="width:4px">,</x><x style="width:4px">3</x><x style="width:4px">7</x><x style="width:4px">7</x><x style="width:4px">,</x><x style="width:4px">0</x><x style="width:4px">5</x><x style="width:4px">4</x><x style="width:4px">.</x><x style="width:4px">1</x><x style="width:4px">0</x></div><div class="n2" style="left:499.5px;width:120px;margin-left:-120px;text-align:right;top:484.7px"><x style="width:4px">2</x><x style="width:4px">6</x><x style="width:4px">,</x><x style="width:4px">1</x><x style="width:4px">9</x><x style="width:4px">1</x><x style="width:4px">,</x><x style="width:4px">2</x><x style="width:4px">3</x><x style="width:4px">9</x></div><div class="n2" style="left:587.8px;width:120px;margin-left:-120px;text-align:right;top:484.7px"><x style="width:4px">1</x><x style="width:4px">,</x><x style="width:4px">5</x><x style="width:4px">8</x><x style="width:4px">7</x><x style="width:4px">,</x><x style="width:4px">4</x><x style="width:4px">4</x><x style="width:4px">2</x><x style="width:4px">,</x><x style="width:4px">5</x><x style="width:4px">9</x><x style="width:4px">3</x><x style="width:4px">.</x><x style="width:4px">2</x><x style="width:4px">4</x></div><div class="n2" style="left:624px;width:80px;margin-left:-40px;text-align:center;top:484.7px"><y style="width:8px">挂</y><y style="width:8px">牌</y><y style="width:8px">协</y><y style="width:8px">议</y><y style="width:8px">交</y><y style="width:8px">易</y></div><div class="n2" style="left:362.9px;width:120px;margin-left:-120px;text-align:right;top:500.1px"><x style="width:4px">1</x><x style="width:4px">,</x><x style="width:4px">8</x><x style="width:4px">9</x><x style="width:4px">5</x><x style="width:4px">,</x><x style="width:4px">3</x><x style="width:4px">8</x><x style="width:4px">0</x></div><div class="n2" style="left:437.3px;width:120px;margin-left:-120px;text-align:right;top:500.1px"><x style="width:4px">8</x><x style="width:4px">0</x><x style="width:4px">,</x><x style="width:4px">9</x><x style="width:4px">6</x><x style="width:4px">7</x><x style="width:4px">,</x><x style="width:4px">3</x><x style="width:4px">8</x><x style="width:4px">6</x><x style="width:4px">.</x><x style="width:4px">6</x><x style="width:4px">0</x></div><div class="n2" style="left:499.5px;width:120px;margin-left:-120px;text-align:right;top:500.1px"><x style="width:4px">6</x><x style="width:4px">4</x><x style="width:4px">,</x><x style="width:4px">2</x><x style="width:4px">2</x><x style="width:4px">2</x><x style="width:4px">,</x><x style="width:4px">1</x><x style="width:4px">7</x><x style="width:4px">7</x></div><div class="n2" style="left:587.8px;width:120px;margin-left:-120px;text-align:right;top:500.1px"><x style="width:4px">3</x><x style="width:4px">,</x><x style="width:4px">8</x><x style="width:4px">3</x><x style="width:4px">3</x><x style="width:4px">,</x><x style="width:4px">9</x><x style="width:4px">5</x><x style="width:4px">4</x><x style="width:4px">,</x><x style="width:4px">7</x><x style="width:4px">6</x><x style="width:4px">5</x><x style="width:4px">.</x><x style="width:4px">1</x><x style="width:4px">8</x></div><div class="n2" style="left:624px;width:80px;margin-left:-40px;text-align:center;top:500.1px"><y style="width:8px">大</y><y style="width:8px">宗</y><y style="width:8px">协</y><y style="width:8px">议</y><y style="width:8px">交</y><y style="width:8px">易</y></div><div class="n2" style="left:362.9px;width:120px;margin-left:-120px;text-align:right;top:515.0px"><x style="width:4px">1</x><x style="width:4px">0</x><x style="width:4px">0</x><x style="width:4px">,</x><x style="width:4px">0</x><x style="width:4px">0</x><x style="width:4px">0</x></div><div class="n2" style="left:437.3px;width:120px;margin-left:-120px;text-align:right;top:515.0px"><x style="width:4px">4</x><x style="width:4px">,</x><x style="width:4px">4</x><x style="width:4px">7</x><x style="width:4px">5</x><x style="width:4px">,</x><x style="width:4px">0</x><x style="width:4px">0</x><x style="width:4px">0</x><x style="width:4px">.</x><x style="width:4px">0</x><x style="width:4px">0</x></div><div class="n2" style="left:499.5px;width:120px;margin-left:-120px;text-align:right;top:515.0px"><x style="width:4px">1</x><x style="width:4px">3</x><x style="width:4px">5</x><x style="width:4px">,</x><x style="width:4px">0</x><x style="width:4px">0</x><x style="width:4px">0</x></div><div class="n2" style="left:587.8px;width:120px;margin-left:-120px;text-align:right;top:515.0px"><x style="width:4px">7</x><x style="width:4px">,</x><x style="width:4px">1</x><x style="width:4px">4</x><x style="width:4px">3</x><x style="width:4px">,</x><x style="width:4px">2</x><x style="width:4px">0</x><x style="width:4px">0</x><x style="width:4px">.</x><x style="width:4px">0</x><x style="width:4px">0</x></div><div class="n2" style="left:624px;width:80px;margin-left:-40px;text-align:center;top:515.0px"><y style="width:8px">单</y><y style="width:8px">向</y><y style="width:8px">竞</y><y style="width:8px">价</y></div><div class="n2 bd" style="left:362.9px;width:120px;margin-left:-120px;text-align:right;top:529.9px"><x style="width:4.5px">2</x><x style="width:4.5px">,</x><x style="width:4.5px">6</x><x style="width:4.5px">1</x><x style="width:4.5px">0</x><x style="width:4.5px">,</x><x style="width:4.5px">3</x><x style="width:4.5px">7</x><x style="width:4.5px">4</x></div><div class="n2 bd" style="left:437.3px;width:120px;margin-left:-120px;text-align:right;top:529.9px"><x style="width:4.5px">1</x><x style="width:4.5px">1</x><x style="width:4.5px">2</x><x style="width:4.5px">,</x><x style="width:4.5px">8</x><x style="width:4.5px">1</x><x style="width:4.5px">9</x><x style="width:4.5px">,</x><x style="width:4.5px">4</x><x style="width:4.5px">4</x><x style="width:4.5px">0</x><x style="width:4.5px">.</x><x style="width:4.5px">7</x><x style="width:4.5px">0</x></div><div class="n2 bd" style="left:499.5px;width:120px;margin-left:-120px;text-align:right;top:529.9px"><x style="width:4.5px">9</x><x style="width:4.5px">0</x><x style="width:4.5px">,</x><x style="width:4.5px">5</x><x style="width:4.5px">4</x><x style="width:4.5px">8</x><x style="width:4.5px">,</x><x style="width:4.5px">4</x><x style="width:4.5px">1</x><x style="width:4.5px">6</x></div><div class="n2 bd" style="left:587.8px;width:120px;margin-left:-120px;text-align:right;top:529.9px"><x style="width:4.5px">5</x><x style="width:4.5px">,</x><x style="width:4.5px">4</x><x style="width:4.5px">2</x><x style="width:4.5px">8</x><x style="width:4.5px">,</x><x style="width:4.5px">5</x><x style="width:4.5px">4</x><x style="width:4.5px">0</x><x style="width:4.5px">,</x><x style="width:4.5px">5</x><x style="width:4.5px">5</x><x style="width:4.5px">8</x><x style="width:4.5px">.</x><x style="width:4.5px">4</x><x style="width:4.5px">2</x></div><div class="n2 bd" style="left:624px;width:80px;margin-left:-40px;text-align:center;top:529.9px"><y style="width:8px">小</y><y style="width:8px">计</y></div></body></html>
